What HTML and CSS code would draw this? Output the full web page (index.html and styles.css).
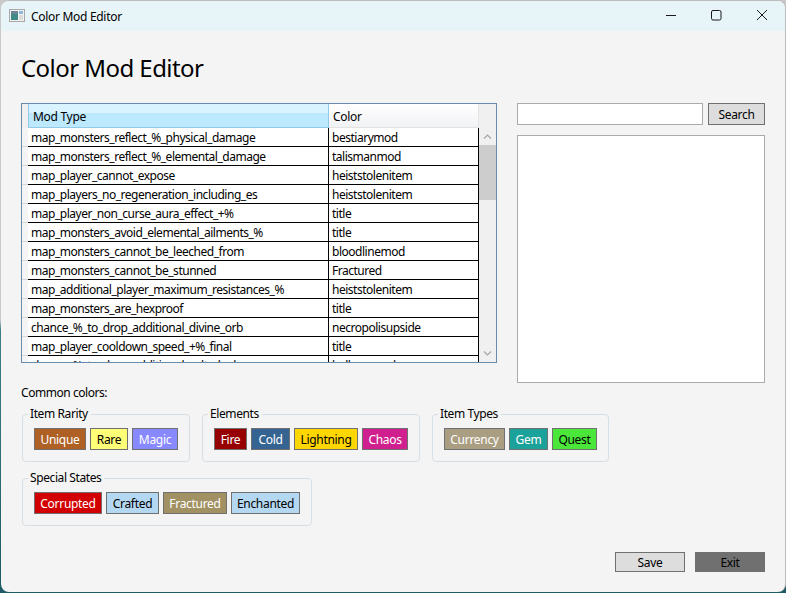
FILE: index.html
```html
<!DOCTYPE html>
<html lang="en">
<head>
<meta charset="utf-8">
<title>Color Mod Editor</title>
<link rel="stylesheet" href="styles.css">
</head>
<body>
<div class="window">
  <header class="titlebar">
    <svg class="app-icon" width="16" height="16" viewBox="0 0 16 16"><rect x="0.5" y="1.5" width="15" height="12" fill="#f2f2f2" stroke="#a8a8a8"/><rect x="2" y="3" width="7" height="9" fill="#3f8a86"/><rect x="2" y="3" width="7" height="3" fill="#6f8296"/><rect x="10" y="3" width="4" height="3" fill="#8fb8d8"/><rect x="10" y="7" width="4" height="5" fill="#dcdcdc"/></svg>
    <span class="title-text">Color Mod Editor</span>
    <span class="win-controls">
      <svg class="win-btn" width="46" height="30" viewBox="0 0 46 30"><path d="M19 14.5h10" stroke="#1a1a1a" fill="none"/></svg>
      <svg class="win-btn" width="46" height="30" viewBox="0 0 46 30"><rect x="18.5" y="9.5" width="9.5" height="9.5" rx="1.5" stroke="#1a1a1a" fill="none"/></svg>
      <svg class="win-btn" width="46" height="30" viewBox="0 0 46 30"><path d="M18 9l10 10M28 9l-10 10" stroke="#1a1a1a" fill="none"/></svg>
    </span>
  </header>
  <main class="content">
    <h1 class="heading">Color Mod Editor</h1>
    <div class="top-row">
      <div class="grid">
        <div class="grid-head">
          <div class="corner"></div>
          <div class="th th-sel">Mod Type</div>
          <div class="th th-color">Color</div>
          <div class="th-fill"></div>
        </div>
        <div class="grid-body">
          <div class="gutter"></div>
          <div class="rows">
            <div class="row"><div class="c1">map_monsters_reflect_%_physical_damage</div><div class="c2">bestiarymod</div></div>
            <div class="row"><div class="c1">map_monsters_reflect_%_elemental_damage</div><div class="c2">talismanmod</div></div>
            <div class="row"><div class="c1">map_player_cannot_expose</div><div class="c2">heiststolenitem</div></div>
            <div class="row"><div class="c1">map_players_no_regeneration_including_es</div><div class="c2">heiststolenitem</div></div>
            <div class="row"><div class="c1">map_player_non_curse_aura_effect_+%</div><div class="c2">title</div></div>
            <div class="row"><div class="c1">map_monsters_avoid_elemental_ailments_%</div><div class="c2">title</div></div>
            <div class="row"><div class="c1">map_monsters_cannot_be_leeched_from</div><div class="c2">bloodlinemod</div></div>
            <div class="row"><div class="c1">map_monsters_cannot_be_stunned</div><div class="c2">Fractured</div></div>
            <div class="row"><div class="c1">map_additional_player_maximum_resistances_%</div><div class="c2">heiststolenitem</div></div>
            <div class="row"><div class="c1">map_monsters_are_hexproof</div><div class="c2">title</div></div>
            <div class="row"><div class="c1">chance_%_to_drop_additional_divine_orb</div><div class="c2">necropolisupside</div></div>
            <div class="row"><div class="c1">map_player_cooldown_speed_+%_final</div><div class="c2">title</div></div>
            <div class="row"><div class="c1">chance_%_to_drop_additional_cult_cloak</div><div class="c2">bellowsmod</div></div>
          </div>
          <div class="scrollbar">
            <svg class="arrow" width="17" height="17" viewBox="0 0 17 17"><path d="M5 10.5l3.5-3.5 3.5 3.5" stroke="#a6a6a6" stroke-width="1.2" fill="none"/></svg>
            <div class="track"><div class="thumb"></div></div>
            <svg class="arrow" width="17" height="17" viewBox="0 0 17 17"><path d="M5 6.5l3.5 3.5 3.5-3.5" stroke="#a6a6a6" stroke-width="1.2" fill="none"/></svg>
          </div>
        </div>
      </div>
      <aside class="side">
        <div class="search-row">
          <input class="search-input" type="text" aria-label="Search">
          <button class="btn search-btn">Search</button>
        </div>
        <div class="preview"></div>
      </aside>
    </div>
    <div class="common-label">Common colors:</div>
    <div class="groups">
      <fieldset class="group"><legend>Item Rarity</legend>
        <span class="chip unique">Unique</span><span class="chip rare">Rare</span><span class="chip magic">Magic</span>
      </fieldset>
      <fieldset class="group"><legend>Elements</legend>
        <span class="chip fire">Fire</span><span class="chip cold">Cold</span><span class="chip lightning">Lightning</span><span class="chip chaos">Chaos</span>
      </fieldset>
      <fieldset class="group"><legend>Item Types</legend>
        <span class="chip currency">Currency</span><span class="chip gem">Gem</span><span class="chip quest">Quest</span>
      </fieldset>
      <fieldset class="group"><legend>Special States</legend>
        <span class="chip corrupted">Corrupted</span><span class="chip crafted">Crafted</span><span class="chip fractured">Fractured</span><span class="chip enchanted">Enchanted</span>
      </fieldset>
    </div>
    <div class="footer">
      <button class="btn foot-btn">Save</button>
      <button class="btn foot-btn exit">Exit</button>
    </div>
  </main>
</div>
</body>
</html>
```
FILE: styles.css
```css
* { box-sizing: border-box; }
html, body { margin: 0; height: 100%; overflow: hidden; }
body { background: linear-gradient(#c9c9c9 0 320px, #3f8088 330px, #1f5a66 593px); font-family: "Noto Sans", "Open Sans", sans-serif; font-size: 12px; letter-spacing: -0.3px; color: #000; }
.window { width: 785px; height: 592px; margin-left: 1px; display: flex; flex-direction: column; background: #f4f4f4; border: 1px solid #bcbcbc; border-left: 0; border-bottom: 0; border-radius: 8px; overflow: hidden; }
.titlebar { height: 30px; flex: none; display: flex; align-items: center; background: #e8f5f8; padding-left: 8px; }
.app-icon { flex: none; }
.title-text { margin-left: 6px; }
.win-controls { margin-left: auto; display: flex; }
.win-btn { display: block; }
.content { flex: 1; display: flex; flex-direction: column; padding: 0 20px 20px; min-height: 0; }
.heading { margin: 20px 0 0; font-size: 24px; letter-spacing: -0.55px; font-weight: 400; line-height: 33px; height: 52px; }
.top-row { display: flex; gap: 20px; height: 281px; flex: none; }
.grid { flex: none; width: 476px; height: 260px; border: 1px solid #688caf; overflow: hidden; background: #fff; }
.grid-head { display: flex; height: 24px; }
.corner { width: 6px; background: #f0f0f0; }
.th { padding-left: 4px; line-height: 25px; border-right: 1px solid #e3e3e3; border-bottom: 1px solid #e3e3e3; }
.th-sel { width: 301px; background: linear-gradient(#d9f4ff 0 40%, #bde9ff 40%); border-left: 1px solid #92c8e8; border-right-color: #92c8e8; border-bottom-color: #92c8e8; }
.th-color { width: 150px; background: linear-gradient(#fff, #f1f2f4); }
.th-fill { flex: 1; background: #f0f0f0; }
.grid-body { display: flex; height: 234px; }
.gutter { width: 6px; background: repeating-linear-gradient(#f4f4f4 0 18px, #d8d8d8 18px 19px); }
.rows { width: 451px; overflow: hidden; letter-spacing: -0.48px; }
.row { display: flex; height: 19px; border-bottom: 1px solid #000; }
.c1 { width: 301px; padding-left: 3px; line-height: 20px; white-space: nowrap; overflow: hidden; border-right: 1px solid #000; }
.c2 { flex: 1; padding-left: 3px; line-height: 20px; white-space: nowrap; overflow: hidden; border-right: 1px solid #000; }
.scrollbar { width: 17px; background: #f0f0f0; display: flex; flex-direction: column; }
.arrow { flex: none; display: block; }
.track { flex: 1; }
.thumb { height: 55px; background: #cdcdcd; }
.side { flex: none; width: 248px; display: flex; flex-direction: column; gap: 10px; }
.search-row { display: flex; gap: 5px; height: 22px; }
.search-input { width: 186px; height: 22px; border: 1px solid #ababab; background: #fff; padding: 0; }
.btn { font: inherit; letter-spacing: inherit; color: #000; background: #dddddd; border: 1px solid #707070; padding: 0; }
.search-btn { width: 57px; height: 22px; }
.preview { width: 248px; height: 248px; background: #fff; border: 1px solid #ababab; }
.common-label { flex: none; height: 16px; line-height: 17px; letter-spacing: -0.45px; }
.groups { display: flex; flex-wrap: wrap; margin: 6px 0 0 1px; width: 640px; column-gap: 12px; row-gap: 8px; }
.group { margin: 0; border: 1px solid #d5dfe5; border-radius: 4px; padding: 0 11px 11px; display: flex; gap: 4px; min-inline-size: 0; }
.group legend { padding: 0 3px 0 2px; margin-left: -6px; line-height: 16px; letter-spacing: -0.4px; }
.chip { display: block; height: 22px; line-height: 22px; text-align: center; border: 1px solid #707070; margin-top: 6px; }
.unique { width: 52px; background: #af6025; color: #fff; }
.rare { width: 38px; background: #ffff77; }
.magic { width: 46px; background: #8888ff; color: #fff; }
.fire { width: 33px; background: #960000; color: #fff; }
.cold { width: 39px; background: #366492; color: #fff; }
.lightning { width: 64px; background: #ffd700; }
.chaos { width: 46px; background: #d02090; color: #fff; }
.currency { width: 61px; background: #aa9e82; color: #fff; }
.gem { width: 39px; background: #1ba29b; color: #fff; }
.quest { width: 45px; background: #4ae63a; }
.corrupted { width: 68px; background: #d20000; color: #fff; }
.crafted { width: 53px; background: #b4d7f2; }
.fractured { width: 64px; background: #a29162; color: #fff; }
.enchanted { width: 69px; background: #b4d7f2; }
.footer { margin-top: auto; display: flex; justify-content: flex-end; gap: 10px; }
.foot-btn { width: 70px; height: 20px; }
.exit { background: #707070; }
```
